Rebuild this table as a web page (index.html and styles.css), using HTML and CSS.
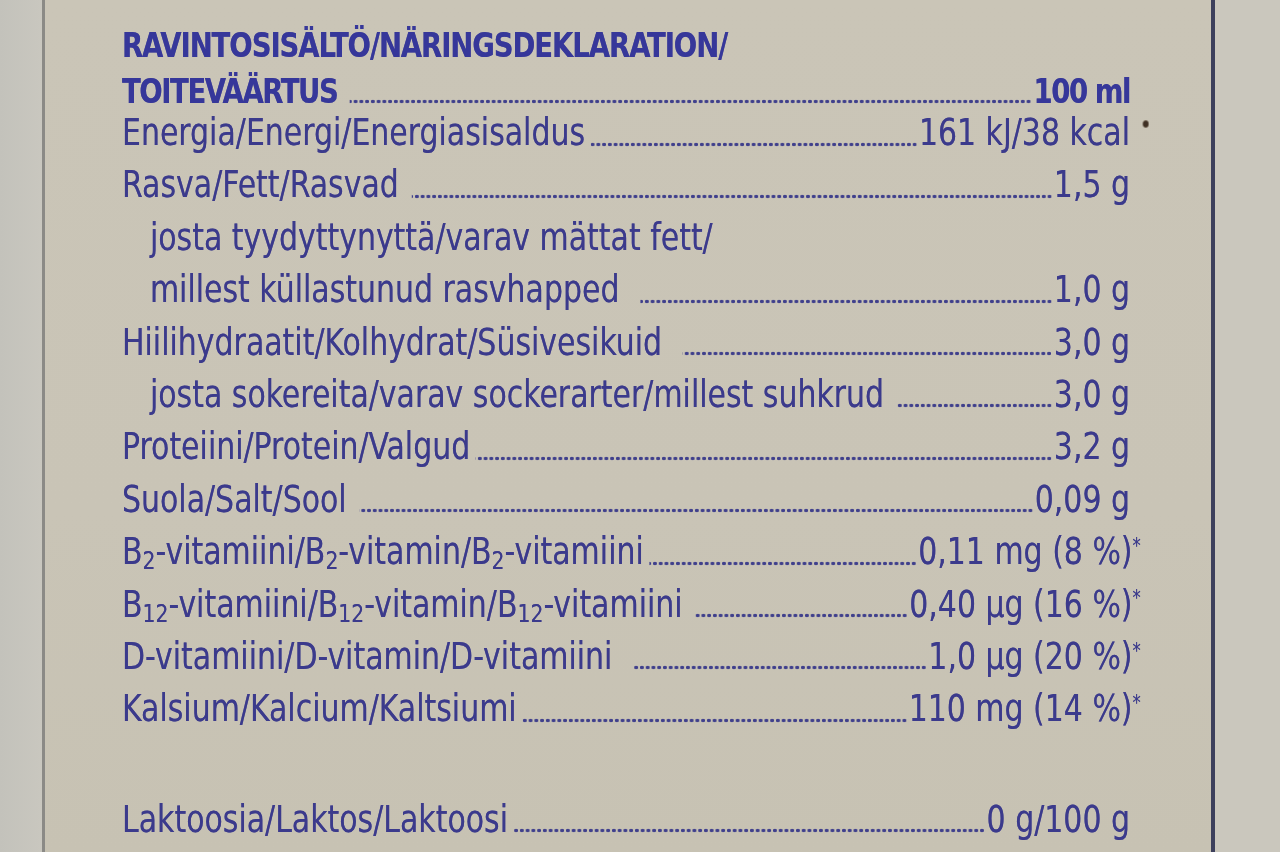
FILE: index.html
```html
<!DOCTYPE html>
<html lang="fi">
<head>
<meta charset="utf-8">
<title>Ravintosisältö</title>
<link rel="stylesheet" href="styles.css">
</head>
<body>
<div class="photo">
  <div class="edge-left"></div>
  <div class="label">
    <div class="sheet">
      <div class="head">RAVINTOSISÄLTÖ/NÄRINGSDEKLARATION/</div>
      <div class="head row"><span class="name">TOITEVÄÄRTUS</span><span class="dots g2"></span><span class="val">100 ml</span></div>
      <div class="body">
        <div class="row"><span class="name">Energia/Energi/Energiasisaldus</span><span class="dots g1"></span><span class="val">161 kJ/38 kcal<span class="speck"></span></span></div>
        <div class="row"><span class="name">Rasva/Fett/Rasvad</span><span class="dots g2"></span><span class="val">1,5 g</span></div>
        <div class="row sub"><span class="name">josta tyydyttynyttä/varav mättat fett/</span></div>
        <div class="row sub"><span class="name">millest küllastunud rasvhapped</span><span class="dots g3"></span><span class="val">1,0 g</span></div>
        <div class="row"><span class="name">Hiilihydraatit/Kolhydrat/Süsivesikuid</span><span class="dots g3"></span><span class="val">3,0 g</span></div>
        <div class="row sub"><span class="name">josta sokereita/varav sockerarter/millest suhkrud</span><span class="dots g2"></span><span class="val">3,0 g</span></div>
        <div class="row"><span class="name">Proteiini/Protein/Valgud</span><span class="dots g1"></span><span class="val">3,2 g</span></div>
        <div class="row"><span class="name">Suola/Salt/Sool</span><span class="dots g2"></span><span class="val">0,09 g</span></div>
        <div class="row"><span class="name">B<sub>2</sub>-vitamiini/B<sub>2</sub>-vitamin/B<sub>2</sub>-vitamiini</span><span class="dots g1"></span><span class="val">0,11 mg (8 %)<sup class="ast">*</sup></span></div>
        <div class="row"><span class="name">B<sub>12</sub>-vitamiini/B<sub>12</sub>-vitamin/B<sub>12</sub>-vitamiini</span><span class="dots g2"></span><span class="val">0,40 µg (16 %)<sup class="ast">*</sup></span></div>
        <div class="row"><span class="name">D-vitamiini/D-vitamin/D-vitamiini</span><span class="dots g3"></span><span class="val">1,0 µg (20 %)<sup class="ast">*</sup></span></div>
        <div class="row"><span class="name">Kalsium/Kalcium/Kaltsiumi</span><span class="dots g1"></span><span class="val">110 mg (14 %)<sup class="ast">*</sup></span></div>
        <div class="row gap-before"><span class="name">Laktoosia/Laktos/Laktoosi</span><span class="dots g1"></span><span class="val">0 g/100 g</span></div>
      </div>
    </div>
  </div>
  <div class="edge-right"></div>
</div>
</body>
</html>
```

FILE: styles.css
```css
html, body {
  margin: 0;
  padding: 0;
}
body {
  width: 1280px;
  height: 852px;
  overflow: hidden;
  background: #c8c5bb;
}
.photo {
  display: flex;
  width: 1280px;
  height: 852px;
}
.edge-left {
  flex: none;
  width: 42px;
  background: linear-gradient(90deg, #c3c2bb 0%, #c9c7bf 100%);
  border-right: 3px solid #8b8a86;
}
.label {
  flex: none;
  width: 1166px;
  background: linear-gradient(180deg, #cac5b7 0%, #c9c4b6 60%, #c7c2b3 100%);
  border-right: 4px solid #3d405c;
  overflow: hidden;
}
.edge-right {
  flex: 1;
  background: #cac7bd;
}
.sheet {
  width: 1120px;
  margin-left: 77px;
  padding-top: 22px;
  transform: scaleX(0.9);
  transform-origin: 0 0;
  color: #3b3a8c;
  font-family: "DejaVu Sans Condensed", "DejaVu Sans", sans-serif;
  font-stretch: condensed;
  text-shadow: 0 0 0.6px rgba(59, 58, 140, 0.7);
}
.head {
  font-weight: bold;
  font-size: 34px;
  letter-spacing: -1.2px;
  line-height: 46px;
  height: 46px;
  color: #36379a;
  white-space: nowrap;
}
.head.row {
  letter-spacing: -1.6px;
}
.row {
  display: flex;
  align-items: stretch;
  white-space: nowrap;
}
.body {
  margin-top: -7px;
  font-size: 37px;
}
.body .row {
  height: 52.4px;
  line-height: 52.4px;
}
.row.sub {
  padding-left: 31px;
}
.row.gap-before {
  margin-top: 58px;
}
.name, .val {
  flex: none;
}
.val {
  position: relative;
}
.dots {
  flex: 1;
  margin-right: 2px;
  background-image: radial-gradient(2.6px 2.1px at 50% 50%, #40408c 0 70%, rgba(64, 64, 140, 0) 100%);
  background-size: 6.4px 5px;
  background-repeat: repeat-x;
  background-position: right 0 top 34.5px;
}
.head .dots {
  background-position: right 0 top 30.5px;
}
.g1 { margin-left: 6px; }
.g2 { margin-left: 14px; }
.g3 { margin-left: 23px; }
sub {
  font-size: 0.68em;
  vertical-align: -0.2em;
  line-height: 0;
}
.ast {
  font-size: 0.55em;
  vertical-align: 0.55em;
  line-height: 0;
  margin-right: -12px;
}
.speck {
  position: absolute;
  right: -21px;
  top: 13px;
  width: 7px;
  height: 8px;
  border-radius: 50%;
  background: radial-gradient(circle, #3f3024 0 45%, rgba(80, 62, 45, 0.6) 70%, rgba(80, 62, 45, 0) 100%);
}
```
